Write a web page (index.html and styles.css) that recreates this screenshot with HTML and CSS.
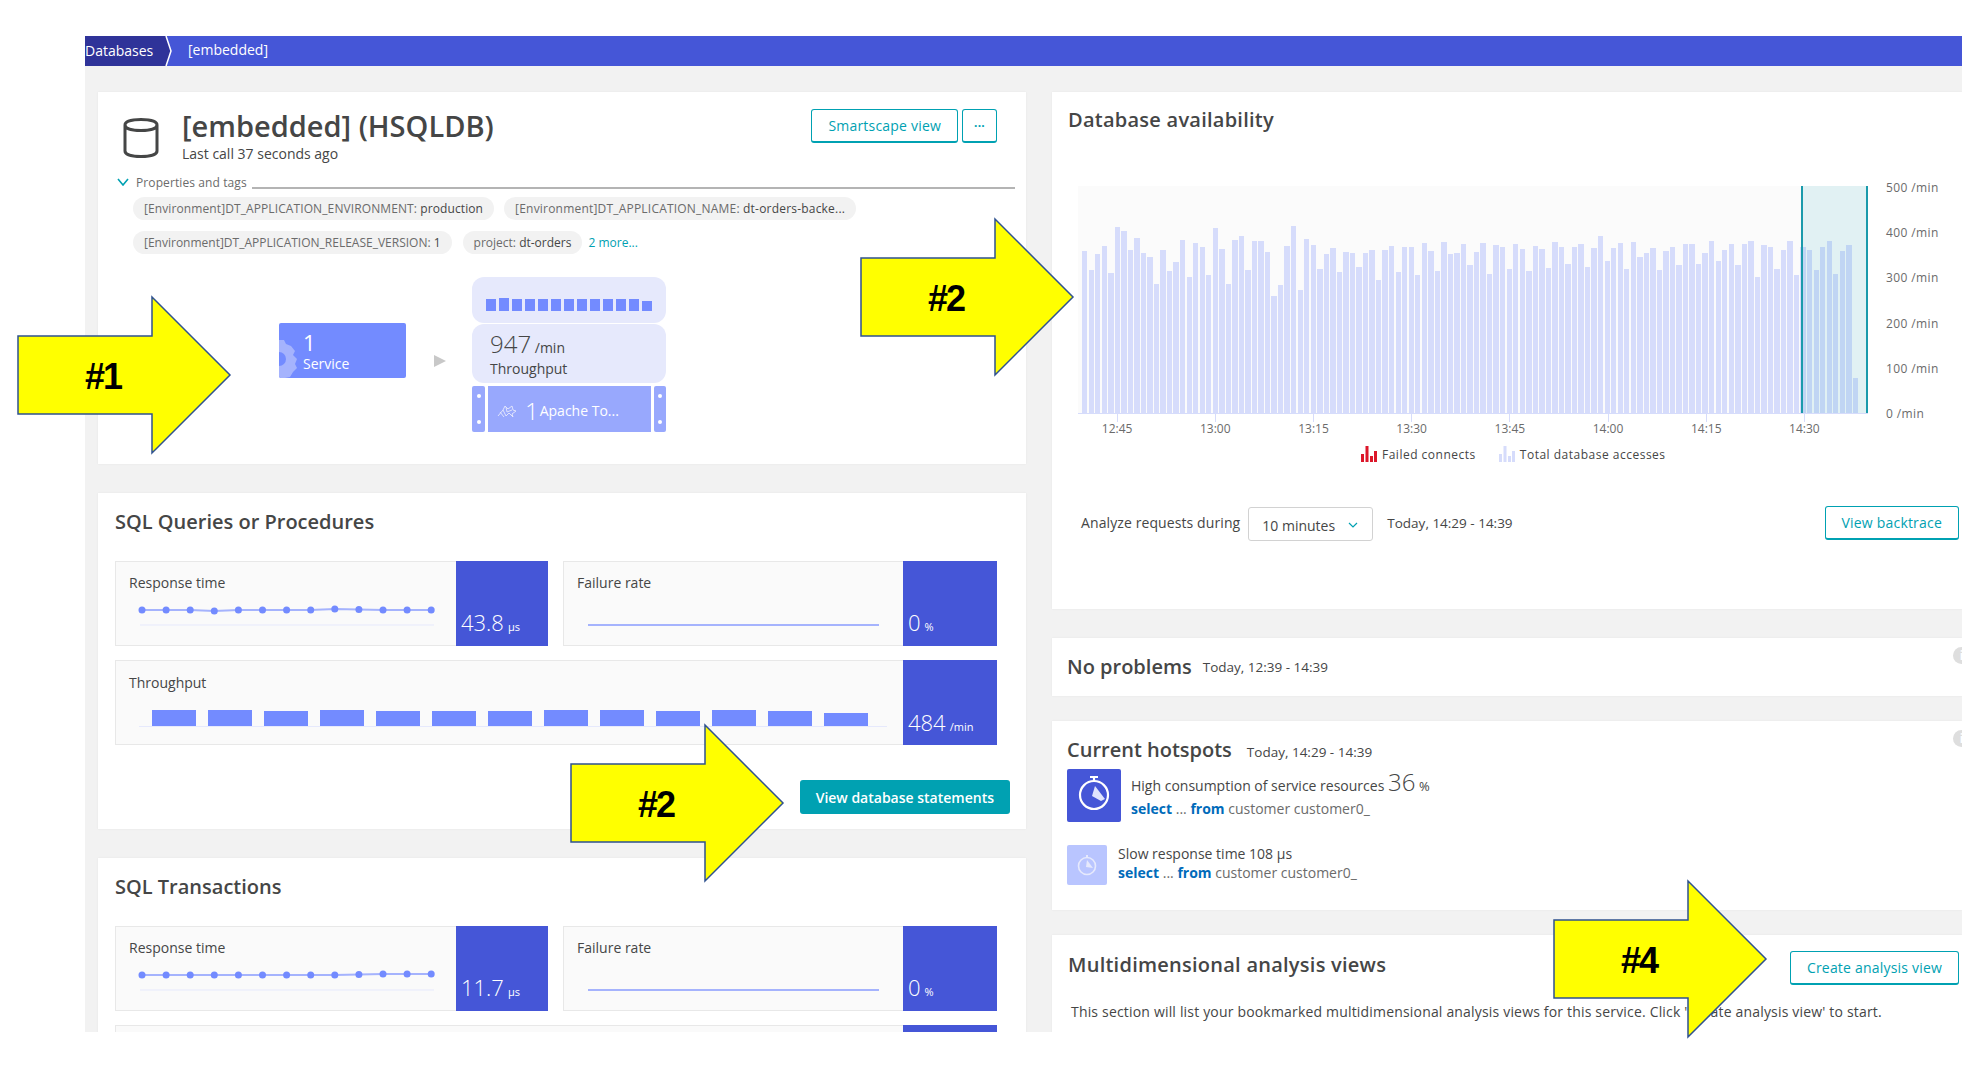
FILE: index.html
```html
<!DOCTYPE html>
<html lang="en">
<head>
  <meta charset="UTF-8">
  <title>[embedded] (HSQLDB)</title>
  <link rel="stylesheet" href="styles.css">
</head>
<body>

<div class="app">
  <nav class="banner">
    <span class="crumb">Databases</span>
    <svg class="crumb-tip" viewBox="0 0 10 30"><polygon points="0,0 2,0 7,15 2,30 0,30" fill="#2f3399"/><polyline points="2,0 7,15 2,30" fill="none" stroke="#fff" stroke-width="1.5"/></svg>
    <span class="crumb-current">[embedded]</span>
  </nav>

  <div class="columns">
    <div class="col">

      <section class="card card-db">
        <header class="db-head">
          <svg class="db-icon" viewBox="0 0 36 40"><path d="M2 7c0-3.500 7-5.500 16-5.500S34 3.500 34 7v26c0 3.500-7 5.500-16 5.500S2 36.500 2 33z M2 7c0 3.500 7 5.500 16 5.500S34 10.500 34 7" fill="none" stroke="#454646" stroke-width="3"/></svg>
          <div class="db-title">
            <h1>[embedded] (HSQLDB)</h1>
            <p>Last call 37 seconds ago</p>
          </div>
          <button class="btn btn-outline">Smartscape view</button>
          <button class="btn btn-outline btn-more">···</button>
        </header>

        <div class="props-head">
          <svg class="props-chevron" viewBox="0 0 12 8"><polyline points="1,1 6,7 11,1" fill="none" stroke="#00a1b2" stroke-width="1.6"/></svg>
          <span>Properties and tags</span>
          <i class="props-line"></i>
        </div>
        <div class="tags">
          <span class="tag tag-first">[Environment]DT_APPLICATION_ENVIRONMENT: <b>production</b></span>
          <span class="tag tag-wide">[Environment]DT_APPLICATION_NAME: <b>dt-orders-backe...</b></span>
        </div>
        <div class="tags">
          <span class="tag">[Environment]DT_APPLICATION_RELEASE_VERSION: <b>1</b></span>
          <span class="tag">project: <b>dt-orders</b></span>
          <a class="more">2 more...</a>
        </div>

        <div class="topology">
          <div class="service">
            <svg class="service-gear" viewBox="0 0 18 38"><path d="M0 0h5l2 4 5 2 4 5-2 4 4 4-2 5 2 4-4 4-3 5-5 1H0z" fill="#a5b3fd"/><path d="M0 12a7 7 0 0 1 0 14z" fill="#738bff"/></svg>
            <div>
              <div class="service-num">1</div>
              <div class="service-name">Service</div>
            </div>
          </div>
          <div class="flow-arrow"></div>
          <div class="stack">
            <div class="stack-bars" id="miniBars"></div>
            <div class="stack-value">
              <div><span class="stack-num">947</span> <span class="stack-unit">/min</span></div>
              <div class="stack-label">Throughput</div>
            </div>
            <div class="tech">
              <div class="tech-side"><i></i><i></i></div>
              <div class="tech-main">
                <svg class="tech-icon" viewBox="0 0 20 14"><path d="M1 12 6 6l2-4 3 3 4-3 1 4 3 1-4 3 1 3M6 6l3 6 3-3M3 8l4 5M9 3l1 5 5-2M12 9l4 4" fill="none" stroke="#e6e9fc" stroke-width="0.9"/></svg>
                <span class="tech-num">1</span> <span class="tech-name">Apache To...</span>
              </div>
              <div class="tech-side"><i></i><i></i></div>
            </div>
          </div>
        </div>
      </section>

      <section class="card card-sql">
        <h2>SQL Queries or Procedures</h2>
        <div class="tile-grid">
          <div class="tile">
            <div class="tile-main">
              <div class="tile-label">Response time</div>
              <svg class="spark" viewBox="0 0 320 34" data-dots="11,11,11,12,11,11,11,11,10,10.500,11,11,11"></svg>
            </div>
            <div class="tile-value">43.8 <small>µs</small></div>
          </div>
          <div class="tile">
            <div class="tile-main">
              <div class="tile-label">Failure rate</div>
              <svg class="spark" viewBox="0 0 320 34"><line x1="24" y1="28" x2="315" y2="28" stroke="#a5b3fd" stroke-width="2"/></svg>
            </div>
            <div class="tile-value">0 <small>%</small></div>
          </div>
          <div class="tile tile-full">
            <div class="tile-main">
              <div class="tile-label">Throughput</div>
              <div class="tile-bars">
                <i style="height:16px"></i><i style="height:16px"></i><i style="height:15px"></i><i style="height:16px"></i><i style="height:15px"></i><i style="height:15px"></i><i style="height:15px"></i><i style="height:16px"></i><i style="height:16px"></i><i style="height:15px"></i><i style="height:16px"></i><i style="height:15px"></i><i style="height:13px"></i>
              </div>
            </div>
            <div class="tile-value">484 <small>/min</small></div>
          </div>
        </div>
        <div class="card-actions">
          <button class="btn btn-solid">View database statements</button>
        </div>
      </section>

      <section class="card card-sql">
        <h2>SQL Transactions</h2>
        <div class="tile-grid">
          <div class="tile">
            <div class="tile-main">
              <div class="tile-label">Response time</div>
              <svg class="spark" viewBox="0 0 320 34" data-dots="11,11,11,11,11,11,11,11,11,10.500,10,10,10"></svg>
            </div>
            <div class="tile-value">11.7 <small>µs</small></div>
          </div>
          <div class="tile">
            <div class="tile-main">
              <div class="tile-label">Failure rate</div>
              <svg class="spark" viewBox="0 0 320 34"><line x1="24" y1="28" x2="315" y2="28" stroke="#a5b3fd" stroke-width="2"/></svg>
            </div>
            <div class="tile-value">0 <small>%</small></div>
          </div>
          <div class="tile tile-full">
            <div class="tile-main"></div>
            <div class="tile-value"></div>
          </div>
        </div>
      </section>
    </div>

    <div class="col">
      <section class="card card-avail">
        <h2>Database availability</h2>
        <div class="chart">
          <div class="plot">
            <div class="plot-bars" id="plotBars"></div>
            <div class="plot-range"></div>
          </div>
          <div class="y-axis">
            <span>500 /min</span><span>400 /min</span><span>300 /min</span><span>200 /min</span><span>100 /min</span><span>0 /min</span>
          </div>
        </div>
        <div class="x-axis">
          <span>12:45</span><span>13:00</span><span>13:15</span><span>13:30</span><span>13:45</span><span>14:00</span><span>14:15</span><span>14:30</span>
        </div>
        <div class="legend">
          <svg viewBox="0 0 16 16"><path d="M0 8h3v8H0zM4.500 0h3v16h-3zM9 10h3v6H9zM13 5h3v11h-3z" fill="#dc172a"/></svg>
          <span>Failed connects</span>
          <svg class="legend-second" viewBox="0 0 16 16"><path d="M0 8h3v8H0zM4.500 0h3v16h-3zM9 10h3v6H9zM13 5h3v11h-3z" fill="#d6dcfb"/></svg>
          <span>Total database accesses</span>
        </div>
        <div class="analyze">
          <span class="analyze-label">Analyze requests during</span>
          <div class="select">10 minutes
            <svg viewBox="0 0 10 6"><polyline points="1,1 5,5 9,1" fill="none" stroke="#00a1b2" stroke-width="1.2"/></svg>
          </div>
          <span class="analyze-time">Today, 14:29 - 14:39</span>
          <button class="btn btn-outline btn-end">View backtrace</button>
        </div>
      </section>

      <section class="card card-problems">
        <h2>No problems</h2><span class="when">Today, 12:39 - 14:39</span>
        <span class="info">i</span>
      </section>

      <section class="card card-hotspots">
        <div class="hot-head"><h2>Current hotspots</h2><span class="when">Today, 14:29 - 14:39</span></div>
        <span class="info">i</span>
        <div class="hot hot-big">
          <div class="hot-icon">
            <svg viewBox="0 0 54 53"><circle cx="27" cy="26" r="14" fill="none" stroke="#fff" stroke-width="2.200"/><path d="M27 12V9M23 8h8" stroke="#fff" stroke-width="2.200"/><polygon points="25,27 28,17 38,30 34,32" fill="#dfe3fd"/></svg>
          </div>
          <div>
            <div>High consumption of service resources <span class="hot-num">36</span> <small>%</small></div>
            <div class="sql"><b>select</b> ... <b>from</b> customer customer0_</div>
          </div>
        </div>
        <div class="hot hot-small">
          <div class="hot-icon">
            <svg viewBox="0 0 40 40"><circle cx="20" cy="21" r="8.500" fill="none" stroke="#e6e9fc" stroke-width="1.600"/><path d="M20 12v-2" stroke="#e6e9fc" stroke-width="2"/><polygon points="19,22 20,15 26,23" fill="#e6e9fc"/></svg>
          </div>
          <div>
            <div>Slow response time 108 µs</div>
            <div class="sql"><b>select</b> ... <b>from</b> customer customer0_</div>
          </div>
        </div>
      </section>

      <section class="card card-views">
        <div class="views-head">
          <h2>Multidimensional analysis views</h2>
          <button class="btn btn-outline">Create analysis view</button>
        </div>
        <p>This section will list your bookmarked multidimensional analysis views for this service. Click 'Create analysis view' to start.</p>
      </section>
    </div>
  </div>
</div>

<svg class="callout callout-1" viewBox="0 0 212 160"><polygon points="0,41 134,41 134,2 212,80 134,158 134,119 0,119"/><text x="85" y="94">#1</text></svg>
<svg class="callout callout-2" viewBox="0 0 212 160"><polygon points="0,41 134,41 134,2 212,80 134,158 134,119 0,119"/><text x="85" y="94">#2</text></svg>
<svg class="callout callout-3" viewBox="0 0 212 160"><polygon points="0,41 134,41 134,2 212,80 134,158 134,119 0,119"/><text x="85" y="94">#2</text></svg>
<svg class="callout callout-4" viewBox="0 0 212 160"><polygon points="0,41 134,41 134,2 212,80 134,158 134,119 0,119"/><text x="85" y="94">#4</text></svg>

<script src="script.js"></script>
</body>
</html>
```

FILE: styles.css
```css
body {
  font-family: "Open Sans", Arial, sans-serif;
  color: #454646;
  background-color: #fff;
  margin: 0;
  font-size: 14px;
  overflow: hidden;
}

.app {
  margin: 36px 0 0 85px;
  height: 996px;
  overflow: hidden;
  background-color: #f2f2f2;
}

.banner {
  display: flex;
  align-items: center;
  height: 30px;
  background-color: #4556d7;
  color: #fff;
  font-size: 14px;
}

.crumb {
  background-color: #2f3399;
  height: 30px;
  line-height: 29px;
  width: 79px;
  box-sizing: border-box;
  white-space: nowrap;
}

.crumb-tip {
  width: 10px;
  height: 30px;
}

.crumb-current {
  margin-left: 14px;
  line-height: 28px;
  align-self: flex-start;
}

.columns {
  display: grid;
  grid-template-columns: 928px 1fr;
  column-gap: 26px;
  padding: 26px 0 0 13px;
}

.col {
  display: flex;
  flex-direction: column;
  min-width: 0;
}

.card {
  position: relative;
  background-color: #fff;
  box-sizing: border-box;
  box-shadow: 0 0 2px rgba(0, 0, 0, 0.06);
}

h2 {
  margin: 0;
  font-size: 20px;
  line-height: 28px;
  font-weight: 600;
}

.card-avail h2,
.card-views h2 {
  letter-spacing: 0.25px;
}

.btn {
  font-family: inherit;
  font-size: 14px;
  letter-spacing: 0.2px;
  height: 34px;
  border-radius: 3px;
  cursor: pointer;
  padding: 0 16px;
}

.btn-outline {
  background-color: #fff;
  color: #00a1b2;
  border: 2px solid #00a1b2;
  border-width: 1px 1px 2px 1px;
}

.btn-solid {
  background-color: #00a1b2;
  color: #fff;
  border: none;
  font-weight: 600;
  letter-spacing: 0;
}

/* database card */
.card-db {
  height: 372px;
  margin-bottom: 29px;
  padding: 17px 11px 0 19px;
}

.db-head {
  display: flex;
  align-items: flex-start;
  padding-right: 18px;
}

.db-icon {
  width: 36px;
  height: 40px;
  margin: 9px 23px 0 6px;
}

.db-title {
  flex: 1;
}

h1 {
  margin: 0 0 1px;
  font-size: 29px;
  line-height: 34px;
  font-weight: 600;
}

.db-title p {
  margin: 0;
  line-height: 20px;
}

.db-head .btn {
  margin-left: 4px;
}

.btn-more {
  padding: 0;
  width: 35px;
  font-size: 12px;
  font-weight: 700;
}

.props-head {
  display: flex;
  align-items: center;
  font-size: 12px;
  letter-spacing: 0.1px;
  color: #6b6b6b;
  margin-top: 9px;
  height: 18px;
}

.props-chevron {
  width: 12px;
  height: 8px;
  margin-right: 7px;
}

.props-line {
  flex: 1;
  border-top: 2px solid #b4b4b4;
  margin: 11px 0 0 5px;
}

.tags {
  display: flex;
  align-items: center;
  margin: 11px 0 0 16px;
}

.props-head + .tags {
  margin-top: 6px;
}

.tag {
  background-color: #f2f2f2;
  border-radius: 12px;
  height: 23px;
  line-height: 23px;
  padding: 0 11px;
  margin-right: 11px;
  font-size: 12px;
  color: #6b6b6b;
  white-space: nowrap;
}

.tag-first {
  letter-spacing: 0.1px;
  margin-right: 10px;
}

.tag-wide {
  letter-spacing: 0.2px;
  margin-right: 12px;
}

.tag b {
  font-weight: 400;
  color: #454646;
}

.more {
  color: #00a1b2;
  font-size: 12px;
  margin-left: -5px;
}

.topology {
  display: flex;
  margin: 23px 0 0 162px;
}

.service {
  display: flex;
  margin-top: 46px;
  width: 127px;
  height: 55px;
  background-color: #738bff;
  border-radius: 2px;
  color: #fff;
  overflow: hidden;
}

.service-gear {
  width: 18px;
  height: 38px;
  align-self: flex-end;
  margin-right: 6px;
}

.service-num {
  font-size: 22px;
  font-weight: 400;
  line-height: 26px;
  margin-top: 6px;
}

.service-name {
  font-size: 14px;
  line-height: 18px;
  font-weight: 500;
}

.flow-arrow {
  width: 0;
  height: 0;
  margin: 78px 26px 0 28px;
  border-left: 12px solid #c8c8c8;
  border-top: 6px solid transparent;
  border-bottom: 6px solid transparent;
}

.stack {
  width: 194px;
}

.stack-bars {
  display: flex;
  align-items: flex-end;
  height: 46px;
  box-sizing: border-box;
  padding: 0 0 12px 14px;
  gap: 3px;
  background-color: #e6e9fc;
  border-radius: 12px;
  margin-bottom: 1px;
}

.stack-bars i {
  width: 10px;
  background-color: #738bff;
}

.stack-value {
  height: 59px;
  box-sizing: border-box;
  padding: 5px 0 0 18px;
  background-color: #e6e9fc;
  border-radius: 12px;
}

.stack-num {
  font-size: 24px;
  font-weight: 300;
  line-height: 30px;
}

.stack-unit {
  font-size: 14px;
}

.stack-label {
  line-height: 20px;
}

.tech {
  display: flex;
  justify-content: space-between;
  height: 46px;
  margin-top: 3px;
}

.tech-side {
  display: flex;
  flex-direction: column;
  align-items: center;
  justify-content: space-between;
  width: 13px;
  padding: 8px 0;
  box-sizing: border-box;
  background-color: #98a8fd;
  border-radius: 2px;
}

.tech-side:last-child {
  width: 12px;
}

.tech-side i {
  width: 4px;
  height: 4px;
  border-radius: 50%;
  background-color: #fff;
}

.tech-main {
  display: flex;
  align-items: center;
  width: 163px;
  box-sizing: border-box;
  padding: 3px 0 0 9px;
  background-color: #98a8fd;
  color: #fff;
}

.tech-icon {
  width: 20px;
  height: 14px;
  margin-right: 8px;
}

.tech-num {
  font-size: 24px;
  font-weight: 300;
  margin-right: 1px;
}

/* sql cards */
.card-sql {
  padding: 15px 29px 0 17px;
  height: 336px;
  margin-bottom: 29px;
}

.tile-grid {
  display: grid;
  grid-template-columns: 433px 434px;
  column-gap: 15px;
  row-gap: 14px;
  margin-top: 25px;
}

.tile {
  display: flex;
  height: 85px;
  box-sizing: border-box;
  background-color: #fafafa;
  border: 1px solid #e8e8e8;
}

.tile-full {
  grid-column: 1 / 3;
}

.tile-main {
  flex: 1;
  min-width: 0;
  padding: 11px 0 0 13px;
  overflow: hidden;
}

.tile-full .tile-main {
  padding-top: 12px;
}

.tile-label {
  line-height: 20px;
}

.spark {
  display: block;
  width: 320px;
  height: 34px;
  margin: 4px 0 0 -13px;
}

.tile-value {
  display: flex;
  align-items: baseline;
  gap: 4px;
  width: 92px;
  box-sizing: border-box;
  margin: -1px -1px -1px 0;
  padding: 46px 0 0 5px;
  background-color: #4556d7;
  color: #fff;
  font-size: 22px;
  font-weight: 300;
  line-height: 30px;
  white-space: nowrap;
}

.tile + .tile .tile-value,
.tile + .tile + .tile .tile-value {
  width: 94px;
}

.tile-full .tile-value {
  padding-top: 47px;
}

.tile-value small {
  font-size: 11px;
  font-weight: 400;
}

.tile-bars {
  display: flex;
  align-items: flex-end;
  gap: 12px;
  height: 16px;
  margin: 17px 16px 0 10px;
  padding-left: 13px;
  border-bottom: 1px solid #e6e9fc;
}

.tile-bars i {
  width: 44px;
  background-color: #738bff;
}

.card-actions {
  display: flex;
  justify-content: flex-end;
  margin: 35px -13px 0 0;
}

/* availability card */
.card-avail {
  height: 517px;
  margin-bottom: 29px;
  padding: 14px 0 0 16px;
}

.chart {
  display: flex;
  margin: 52px 0 0 10px;
}

.plot {
  position: relative;
  width: 790px;
  height: 227px;
  background-color: #fbfbfb;
  border-bottom: 1px solid #d6dcfb;
}

.plot-bars {
  display: flex;
  align-items: flex-end;
  height: 100%;
  padding-left: 4px;
  gap: 1.15px;
}

.plot-bars i {
  flex: none;
  width: 5.4px;
  background-color: #d6dcfb;
}

.plot-range {
  position: absolute;
  left: 723px;
  top: 0;
  bottom: 0;
  width: 63px;
  background-color: rgba(0, 161, 178, 0.1);
  border-left: 2px solid #1a9aab;
  border-right: 2px solid #1a9aab;
}

.y-axis {
  display: flex;
  flex-direction: column;
  justify-content: space-between;
  height: 242px;
  margin: -6px 0 0 18px;
  font-size: 12px;
  line-height: 16px;
  letter-spacing: 0.4px;
  color: #6b6b6b;
}

.x-axis {
  display: flex;
  margin-top: -8px;
}

.x-axis span {
  width: 98.2px;
  flex: none;
  text-align: center;
  font-size: 12px;
  line-height: 16px;
  color: #6b6b6b;
}

.x-axis span::before {
  content: "";
  display: block;
  width: 1px;
  height: 8px;
  margin: 0 auto -1px;
  background-color: #d6dcfb;
}

.legend {
  display: flex;
  align-items: center;
  margin: 8px 0 0 293px;
  font-size: 12px;
  letter-spacing: 0.5px;
  height: 18px;
}

.legend svg {
  width: 16px;
  height: 16px;
  margin-right: 5px;
}

.legend .legend-second {
  margin-left: 23px;
}

.analyze {
  display: flex;
  align-items: center;
  margin: 41px 3px 0 13px;
}

.analyze-label {
  letter-spacing: 0.1px;
}

.select {
  display: flex;
  align-items: center;
  justify-content: space-between;
  width: 125px;
  height: 34px;
  box-sizing: border-box;
  padding: 2px 14px 0 13px;
  margin: 3px 0 0 8px;
  border: 1px solid #d2d2d2;
  border-radius: 3px;
}

.select svg {
  width: 10px;
  height: 6px;
}

.analyze-time {
  font-size: 13.5px;
  margin-left: 14px;
}

.btn-end {
  margin-left: auto;
}

.when {
  font-size: 13.5px;
  margin-left: 11px;
}

.info {
  position: absolute;
  right: -8px;
  top: 9px;
  width: 17px;
  height: 17px;
  line-height: 17px;
  text-align: center;
  border-radius: 50%;
  background-color: #dedede;
  color: #fff;
  font-size: 12px;
  font-weight: 700;
}

.card-problems {
  display: flex;
  align-items: center;
  height: 58px;
  padding-left: 15px;
  margin-bottom: 25px;
}

.card-hotspots {
  height: 189px;
  padding: 15px 0 0 15px;
  margin-bottom: 25px;
}

.hot-head {
  display: flex;
  align-items: baseline;
}

.hot-head .when {
  margin-left: 15px;
}

.hot {
  display: flex;
  align-items: flex-start;
}

.hot-icon {
  flex: none;
  border-radius: 2px;
}

.hot-icon svg {
  display: block;
}

.hot-big {
  margin-top: 5px;
}

.hot-big .hot-icon {
  background-color: #4556d7;
  margin-right: 10px;
}

.hot-big .hot-icon svg {
  width: 54px;
  height: 53px;
}

.hot-big .sql {
  margin-top: 4px;
}

.hot-num {
  font-size: 24px;
  font-weight: 300;
  line-height: 26px;
}

.hot small {
  font-size: 13px;
}

.sql {
  color: #6b6b6b;
  line-height: 20px;
}

.sql b {
  color: #006bba;
  font-weight: 700;
}

.hot-small {
  margin-top: 23px;
  line-height: 18px;
}

.hot-small .hot-icon {
  background-color: #b9c5ff;
  margin-right: 11px;
}

.hot-small .hot-icon svg {
  width: 40px;
  height: 40px;
}

.card-views {
  padding: 16px 3px 0 16px;
  height: 200px;
}

.views-head {
  display: flex;
  justify-content: space-between;
  align-items: flex-start;
}

.card-views p {
  margin: 17px 0 0 3px;
  font-size: 14px;
  letter-spacing: 0.18px;
}

/* yellow arrows drawn over the screenshot */
.callout {
  position: absolute;
  width: 212px;
  height: 160px;
  overflow: visible;
}

.callout polygon {
  fill: #ffff00;
  stroke: #2f528f;
  stroke-width: 1.5;
}

.callout text {
  font-family: "Liberation Sans", Arial, sans-serif;
  font-size: 36px;
  font-weight: 700;
  letter-spacing: -2px;
  text-anchor: middle;
  fill: #000;
}

.callout-1 { left: 18px; top: 295px; }
.callout-2 { left: 861px; top: 217px; }
.callout-3 { left: 571px; top: 723px; }
.callout-4 { left: 1554px; top: 879px; }
```

FILE: script.js
```js
// tops of the bars, read off the chart (zoomed px, baseline 1000, 3 per css px)
const tops = [513,570,523,498,580,441,454,510,476,519,532,612,510,573,548,482,593,491,501,586,
  444,507,612,482,469,570,485,485,516,650,615,498,438,632,479,497,568,522,504,576,
  516,519,561,520,510,600,510,498,576,501,501,586,491,513,573,488,522,519,494,557,
  516,491,583,497,501,568,494,507,573,498,507,564,488,501,554,501,494,561,504,469,
  545,504,491,568,488,532,519,504,570,513,501,557,494,494,552,519,485,545,510,494,
  557,494,485,592,497,501,568,510,485,586,501,510,570,501,485,583,513,497,895];

const plotBars = document.getElementById('plotBars');
tops.forEach(top => {
  const bar = document.createElement('i');
  bar.style.height = ((1000 - top) / 3) + 'px';
  plotBars.appendChild(bar);
});

const miniBars = document.getElementById('miniBars');
[12, 13, 12, 12, 12, 12, 12, 12, 12, 12, 12, 12, 10].forEach(h => {
  const bar = document.createElement('i');
  bar.style.height = h + 'px';
  miniBars.appendChild(bar);
});

// sparkline with dots for the response time tiles
document.querySelectorAll('.spark[data-dots]').forEach(svg => {
  const ys = svg.dataset.dots.split(',').map(n => Number(n) + 2);
  const pts = ys.map((y, i) => [26 + i * 24.1, y]);
  let out = '<line x1="24" y1="28" x2="318" y2="28" stroke="#e6e9fc" stroke-width="1"/>';
  out += '<polyline fill="none" stroke="#a5b3fd" stroke-width="2" points="' + pts.map(p => p.join(',')).join(' ') + '"/>';
  pts.forEach(p => {
    out += '<circle cx="' + p[0] + '" cy="' + p[1] + '" r="3.5" fill="#738bff"/>';
  });
  svg.innerHTML = out;
});
```
